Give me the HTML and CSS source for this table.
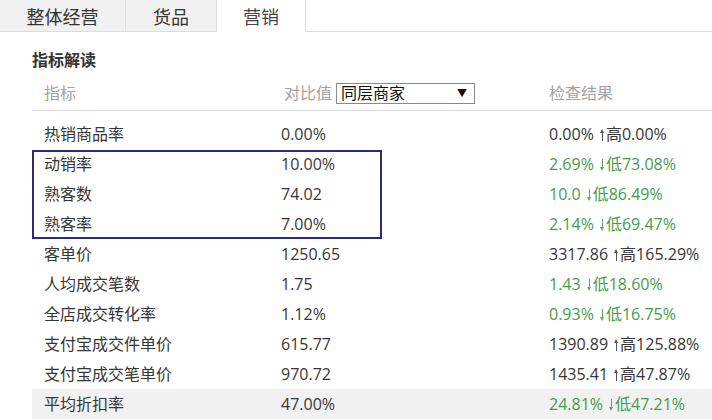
FILE: index.html
```html
<!DOCTYPE html>
<html lang="zh-CN">
<head>
<meta charset="utf-8">
<link rel="stylesheet" href="styles.css">
</head>
<body>
<div class="tabs">
  <div class="tab">整体经营</div>
  <div class="tab tab-mid">货品</div>
  <div class="tab tab-active">营销</div>
  <div class="tab-fill"></div>
</div>
<div class="panel">
  <div class="title">指标解读</div>
  <div class="row head">
    <div>指标</div>
    <div class="cmp"><span>对比值</span><span class="select"><span>同层商家</span><span class="caret">▼</span></span></div>
    <div>检查结果</div>
  </div>
  <div class="rows">
    <div class="row"><div>热销商品率</div><div>0.00%</div><div>0.00%<i class="arr up"></i>高0.00%</div></div>
    <div class="group">
      <div class="row"><div>动销率</div><div>10.00%</div><div class="green">2.69%<i class="arr down"></i>低73.08%</div></div>
      <div class="row"><div>熟客数</div><div>74.02</div><div class="green">10.0<i class="arr down"></i>低86.49%</div></div>
      <div class="row"><div>熟客率</div><div>7.00%</div><div class="green">2.14%<i class="arr down"></i>低69.47%</div></div>
    </div>
    <div class="row"><div>客单价</div><div>1250.65</div><div>3317.86<i class="arr up"></i>高165.29%</div></div>
    <div class="row"><div>人均成交笔数</div><div>1.75</div><div class="green">1.43<i class="arr down"></i>低18.60%</div></div>
    <div class="row"><div>全店成交转化率</div><div>1.12%</div><div class="green">0.93%<i class="arr down"></i>低16.75%</div></div>
    <div class="row"><div>支付宝成交件单价</div><div>615.77</div><div>1390.89<i class="arr up"></i>高125.88%</div></div>
    <div class="row"><div>支付宝成交笔单价</div><div>970.72</div><div>1435.41<i class="arr up"></i>高47.87%</div></div>
    <div class="row row-hl"><div>平均折扣率</div><div>47.00%</div><div class="green">24.81%<i class="arr down"></i>低47.21%</div></div>
  </div>
</div>
</body>
</html>
```
FILE: styles.css
```css
* { box-sizing: border-box; margin: 0; padding: 0; }
html, body { background: #fff; }
body {
  width: 712px;
  height: 420px;
  overflow: hidden;
  font-family: "Open Sans", "Noto Sans CJK SC", sans-serif;
  color: #363636;
  font-size: 16px;
}
.tabs {
  display: flex;
  height: 32px;
}
.tab {
  width: 126px;
  height: 32px;
  background: #f1f1f1;
  border-right: 1px solid #dcdcdc;
  border-bottom: 1px solid #dcdcdc;
  display: flex;
  align-items: center;
  justify-content: center;
  font-size: 18px;
  color: #333;
}
.tab-mid { width: 91px; }
.tab-active {
  width: 89px;
  background: #fff;
  border-bottom: none;
  color: #444;
}
.tab-fill {
  flex: 1;
  border-bottom: 1px solid #dcdcdc;
}
.panel {
  padding-left: 32px;
}
.title {
  font-weight: bold;
  height: 46px;
  padding-top: 16px;
  line-height: 24px;
  font-size: 16px;
  color: #333;
}
.row {
  display: grid;
  grid-template-columns: 237px 268px 1fr;
  padding-left: 12px;
  height: 30px;
  align-items: center;
  line-height: 30px;
  white-space: nowrap;
}
.head {
  height: 33px;
  border-bottom: 1px solid #dcdcdc;
  color: #a3a3a3;
  line-height: 22px;
  padding-bottom: 2px;
}
.cmp {
  display: flex;
  align-items: center;
  gap: 4px;
  padding-left: 3px;
}
.select {
  display: flex;
  align-items: center;
  justify-content: space-between;
  width: 139px;
  height: 21px;
  border: 1px solid #8a8a8a;
  padding: 0 7px 0 4px;
  color: #111;
  line-height: 19px;
}
.caret {
  font-size: 10px;
  color: #111;
}
.rows {
  padding-top: 8px;
}
.group {
  position: relative;
}
.group::after {
  content: "";
  position: absolute;
  left: 0;
  top: 1px;
  width: 346px;
  bottom: 0;
  border: 2px solid #2d2b78;
}
.green { color: #459c4c; }
.row-hl { background: #f1f1f1; }
.arr {
  display: inline-block;
  width: 5px;
  height: 12px;
  margin: 0 1px 0 6px;
  vertical-align: -1px;
  position: relative;
  opacity: 0.85;
}
.arr::before {
  content: "";
  position: absolute;
  left: 2px;
  width: 1px;
  background: currentColor;
}
.arr::after {
  content: "";
  position: absolute;
  left: 0;
  border-left: 2.5px solid transparent;
  border-right: 2.5px solid transparent;
}
.up::before { top: 3px; bottom: 0; }
.up::after { top: 0; border-bottom: 4px solid currentColor; }
.down::before { top: 0; bottom: 3px; }
.down::after { bottom: 0; border-top: 4px solid currentColor; }
```
